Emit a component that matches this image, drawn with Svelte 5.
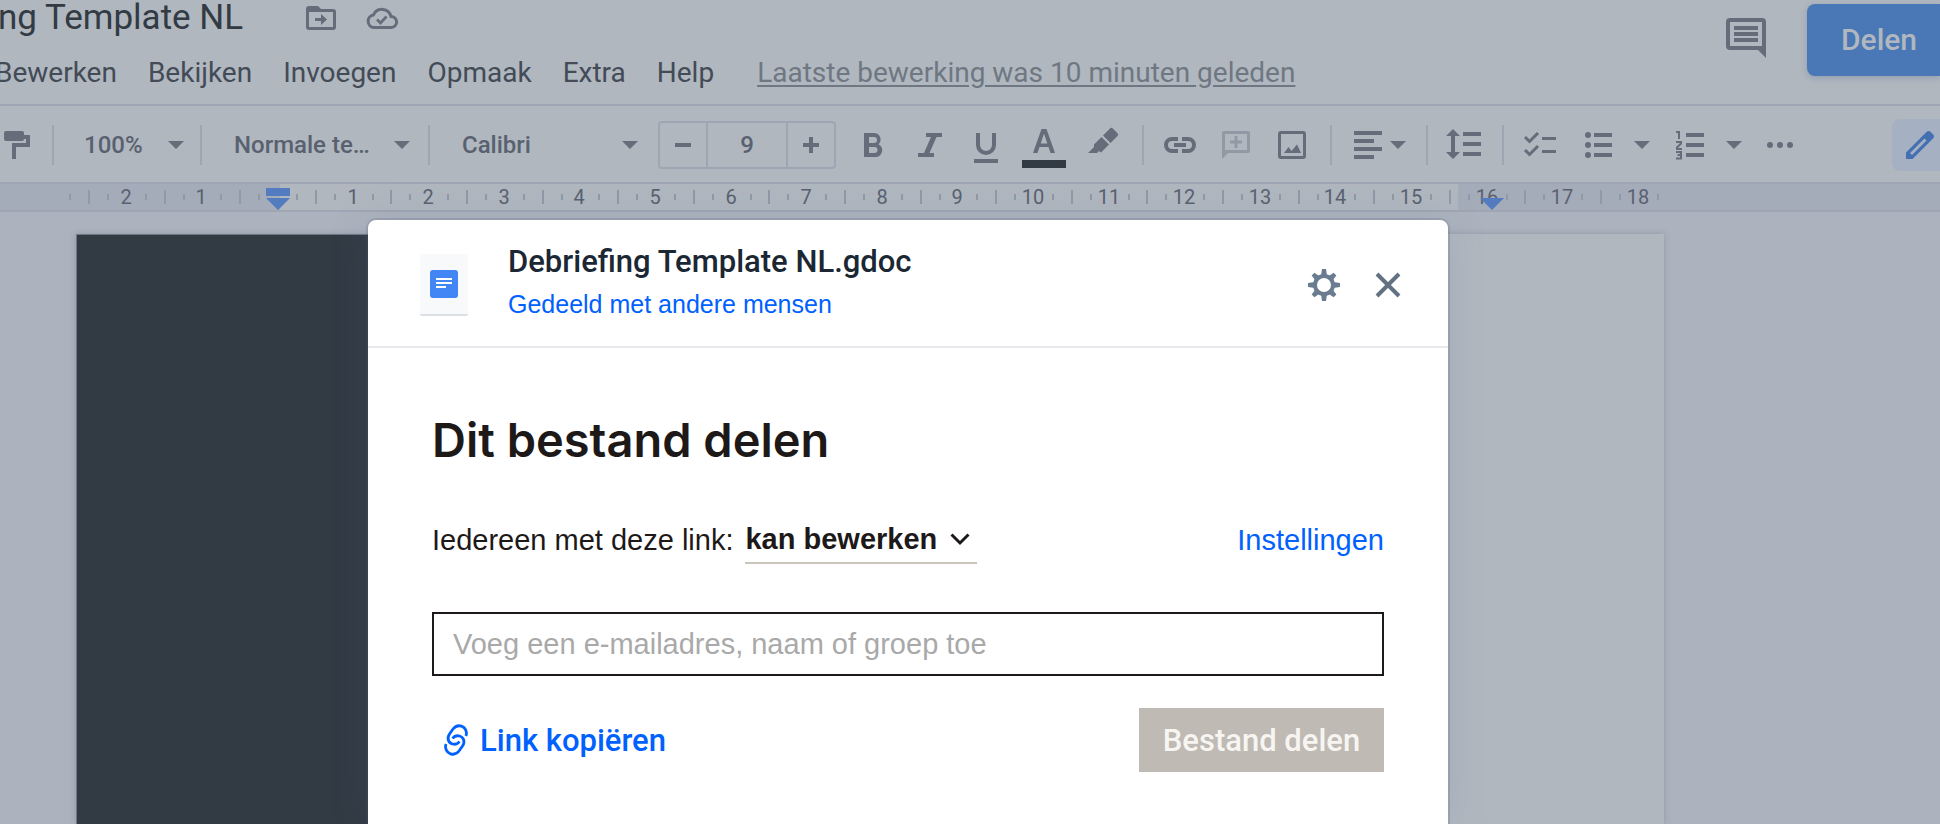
<script>
  let permission = $state('kan bewerken')
  let email = $state('')
  let zoom = $state('100%')
  let textStyle = $state('Normale te…')
  let font = $state('Calibri')

  const menus = ['Bewerken', 'Bekijken', 'Invoegen', 'Opmaak', 'Extra', 'Help']

  // ruler: one centimetre in pixels, and where the left margin sits
  const CM = 75.6
  const ORIGIN = 278

  const ticks = []
  for (let q = -11; q <= 73; q++) {
    if (q % 4 === 0) continue
    ticks.push({ x: Math.round(ORIGIN + (q * CM) / 4), big: q % 2 === 0 })
  }

  const numbers = []
  for (let n = -2; n <= 18; n++) {
    if (n !== 0) numbers.push({ x: Math.round(ORIGIN + n * CM - 1), label: Math.abs(n) })
  }
</script>

{#snippet caret()}
  <svg class="caret" width="16" height="8" viewBox="0 0 16 8"><path d="M0 0h16L8 8z" /></svg>
{/snippet}

<div class="app">
  <header class="header">
    <div class="header-main">
      <div class="title-row">
        <span class="doc-title">ng Template NL</span>
        <button class="plain" aria-label="Verplaatsen">
          <svg width="30" height="24" viewBox="0 0 30 24">
            <path fill-rule="evenodd" d="M3 0h9l3 3h12a3 3 0 0 1 3 3v15a3 3 0 0 1-3 3H3a3 3 0 0 1-3-3V3a3 3 0 0 1 3-3zM3 6v15h24V6z" />
            <path d="M9 12h6V8l6 5.500l-6 5.500v-4H9z" />
          </svg>
        </button>
        <button class="plain" aria-label="Documentstatus">
          <svg width="32" height="24" viewBox="0 0 32 24">
            <path class="line" d="M8 21.500a6.300 6.300 0 0 1-.6-12.500A9.300 9.300 0 0 1 25 10.500a5.500 5.500 0 0 1 .3 11z" stroke-width="3" />
            <path class="line" d="M11 13.500l3.500 3.500l6-6.500" stroke-width="2.600" />
          </svg>
        </button>
      </div>
      <nav class="menu-row" aria-label="Menu">
        {#each menus as menu}
          <button class="menu">{menu}</button>
        {/each}
        <a class="last-edit" href="#geschiedenis">Laatste bewerking was 10 minuten geleden</a>
      </nav>
    </div>
    <div class="header-actions">
      <button class="plain comments" aria-label="Opmerkingen">
        <svg width="40" height="40" viewBox="0 0 40 40">
          <path fill-rule="evenodd" d="M4 0h32a4 4 0 0 1 4 4v36l-8-8H4a4 4 0 0 1-4-4V4a4 4 0 0 1 4-4zM4 4v24h32V4zM8 8h24v4H8zM8 14h24v4H8zM8 20h24v4H8z" />
        </svg>
      </button>
      <button class="share">Delen</button>
    </div>
  </header>

  <div class="toolbar" role="toolbar" aria-label="Opmaak">
    <button class="tool" aria-label="Opmaak kopiëren">
      <svg width="36" height="36" viewBox="0 0 36 36"><path d="M6 4h16a2 2 0 0 1 2 2v2h6v12H16v12h-4V16h14v-4h-2a2 2 0 0 1-2 2H6a2 2 0 0 1-2-2V6a2 2 0 0 1 2-2z" /></svg>
    </button>
    <span class="divider tight"></span>
    <label class="picker zoom">
      <select bind:value={zoom} aria-label="Zoomen"><option>100%</option></select>
      {@render caret()}
    </label>
    <span class="divider tight"></span>
    <label class="picker style">
      <select bind:value={textStyle} aria-label="Stijlen"><option>Normale te…</option></select>
      {@render caret()}
    </label>
    <span class="divider tight"></span>
    <label class="picker font">
      <select bind:value={font} aria-label="Lettertype"><option>Calibri</option></select>
      {@render caret()}
    </label>

    <div class="size">
      <button aria-label="Kleiner"><svg width="16" height="16" viewBox="0 0 16 16"><path d="M0 6h16v4H0z" /></svg></button>
      <input value="9" aria-label="Tekengrootte" />
      <button aria-label="Groter"><svg width="16" height="16" viewBox="0 0 16 16"><path d="M6 0h4v6h6v4h-6v6H6v-6H0V6h6z" /></svg></button>
    </div>

    <div class="group">
      <button class="tool" aria-label="Vet">
        <svg width="36" height="36" viewBox="0 0 36 36">
          <path fill-rule="evenodd" d="M8 6h10.500a6.500 6.500 0 0 1 4 11.200a6.800 6.800 0 0 1-3.500 12.800H8zM13 10v6h5a3 3 0 0 0 0-6zM13 20v6h5.500a3 3 0 0 0 0-6z" />
        </svg>
      </button>
      <button class="tool" aria-label="Cursief">
        <svg width="36" height="36" viewBox="0 0 36 36"><path d="M14 6h16v4h-5.500l-7 16H22v4H6v-4h6l7-16h-5z" /></svg>
      </button>
      <button class="tool" aria-label="Onderstrepen">
        <svg width="36" height="36" viewBox="0 0 36 36">
          <path class="line" d="M10 6v12a8 8 0 0 0 16 0V6" stroke-width="4" />
          <path d="M6 32h24v4H6z" />
        </svg>
      </button>
      <button class="tool wide" aria-label="Tekstkleur">
        <svg width="44" height="36" viewBox="1 0 44 36">
          <path fill-rule="evenodd" d="M19.500 2h5L33 26h-4.500l-2-6h-9l-2 6H11zM22 6.500L18.700 16.500h6.600z" />
          <path class="ink" d="M0 33h44v8H0z" />
        </svg>
      </button>
      <button class="tool" aria-label="Markeringskleur">
        <svg width="36" height="36" viewBox="0 0 36 36">
          <path d="M24 1.500a2 2 0 0 1 2.800 0l4.700 4.700a2 2 0 0 1 0 2.800l-7 7l-7.500-7.500zM15.500 10l7.500 7.500l-8 8l-2-1.500l-2 2H2l6-6v-2.500z" />
        </svg>
      </button>
    </div>
    <span class="divider"></span>
    <div class="group">
      <button class="tool" aria-label="Link invoegen">
        <svg width="36" height="36" viewBox="0 0 36 36">
          <path class="line" d="M16 12h-6a6 6 0 0 0 0 12h6M20 12h6a6 6 0 0 1 0 12h-6" stroke-width="4" />
          <path d="M12 16h12v4H12z" />
        </svg>
      </button>
      <button class="tool" disabled aria-label="Opmerking toevoegen">
        <svg width="36" height="36" viewBox="0 0 36 36">
          <path fill-rule="evenodd" d="M6 4h24a2 2 0 0 1 2 2v18a2 2 0 0 1-2 2H10l-6 6V6a2 2 0 0 1 2-2zM7 7v16h22V7zM16.500 9h3v4.500H24v3h-4.500V21h-3v-4.500H12v-3h4.500z" />
        </svg>
      </button>
      <button class="tool" aria-label="Afbeelding invoegen">
        <svg width="36" height="36" viewBox="0 0 36 36">
          <path fill-rule="evenodd" d="M7 4h22a3 3 0 0 1 3 3v22a3 3 0 0 1-3 3H7a3 3 0 0 1-3-3V7a3 3 0 0 1 3-3zM7 7v22h22V7zM10 26l4.500-6l3 4l5.500-6.500l4 8.500z" />
        </svg>
      </button>
    </div>
    <span class="divider"></span>
    <button class="tool pair near" aria-label="Uitlijnen">
      <svg width="36" height="36" viewBox="0 0 36 36"><path d="M4 4h28v4H4zM4 12h20v4H4zM4 20h28v4H4zM4 28h20v4H4z" /></svg>
      {@render caret()}
    </button>
    <span class="divider"></span>
    <button class="tool" aria-label="Regelafstand">
      <svg width="36" height="36" viewBox="0 0 36 36"><path d="M7 2l7 7H9v16h5l-7 7l-7-7h5V9H0zM17 5h18v4H17zM17 15h18v4H17zM17 25h18v4H17z" /></svg>
    </button>
    <span class="divider"></span>
    <div class="group lists">
      <button class="tool" aria-label="Checklist">
        <svg width="36" height="36" viewBox="0 0 36 36">
          <path d="M20 10h14v3H20zM20 23h14v3H20z" />
          <path class="line" d="M3 10l4.500 4.500L16 6M3 23l4.500 4.500L16 19" stroke-width="3" />
        </svg>
      </button>
      <button class="tool pair" aria-label="Lijst met opsommingstekens">
        <svg width="36" height="36" viewBox="0 0 36 36">
          <circle cx="8" cy="8" r="3" /><circle cx="8" cy="18" r="3" /><circle cx="8" cy="28" r="3" />
          <path d="M14 6h18v4H14zM14 16h18v4H14zM14 26h18v4H14z" />
        </svg>
        {@render caret()}
      </button>
      <button class="tool pair" aria-label="Genummerde lijst">
        <svg width="36" height="36" viewBox="0 0 36 36">
          <path d="M14 6h18v4H14zM14 16h18v4H14zM14 26h18v4H14z" />
          <path class="line" d="M4 5h3v7M4 15h5v1.500l-4 4V22h5M4 25h5v6.500H4M5.500 28H9" stroke-width="2" />
        </svg>
        {@render caret()}
      </button>
      <button class="tool" aria-label="Meer">
        <svg width="36" height="36" viewBox="0 0 36 36"><circle cx="6" cy="18" r="3" /><circle cx="16" cy="18" r="3" /><circle cx="26" cy="18" r="3" /></svg>
      </button>
    </div>
    <button class="mode" aria-label="Bewerkingsmodus">
      <svg width="28" height="28" viewBox="0 0 28 28">
        <path fill-rule="evenodd" d="M0 21.500L20.500 1a3 3 0 0 1 4.200 0L27 3.300a3 3 0 0 1 0 4.200L6.500 28H0zM4 22l2 2L20.500 9.500l-2-2z" />
      </svg>
    </button>
  </div>

  <div class="ruler">
    <svg width="100%" height="26" aria-hidden="true">
      <rect class="ruler-page" x="280" y="0" width="1178" height="26" />
      {#each ticks as tick}
        <rect class="tick" x={tick.x - 1} y={tick.big ? 6 : 10} width="2" height={tick.big ? 14 : 6} />
      {/each}
      {#each numbers as n}
        <text x={n.x} y="20" text-anchor="middle">{n.label}</text>
      {/each}
      <path class="marker" d="M266 4h24v8h-24zM266 14h24l-12 12z" />
      <path class="marker" d="M1480 14h24l-12 12z" />
    </svg>
  </div>

  <main class="canvas">
    <div class="sheet"><div class="cover"></div></div>
  </main>

  <div class="overlay">
    <div class="modal" role="dialog" aria-labelledby="share-title">
      <div class="modal-head">
        <div class="file-thumb">
          <svg width="28" height="28" viewBox="0 0 28 28">
            <rect width="28" height="28" rx="3" fill="#4285f4" />
            <path d="M6 8h16v2H6zM6 12h16v2H6zM6 16h10v2H6z" fill="#fff" />
          </svg>
        </div>
        <div class="file-info">
          <strong>Debriefing Template NL.gdoc</strong>
          <a href="#gedeeld">Gedeeld met andere mensen</a>
        </div>
        <button class="plain gear" aria-label="Instellingen openen">
          <svg width="32" height="32" viewBox="-16 -16 32 32">
            <circle r="9" fill="none" stroke="currentColor" stroke-width="4" />
            {#each [0, 45, 90, 135, 180, 225, 270, 315] as angle}
              <path d={angle % 90 ? 'M-3 -9L-2 -15.500H2L3 -9z' : 'M-3 -9L-2 -16H2L3 -9z'} transform="rotate({angle})" />
            {/each}
          </svg>
        </button>
        <button class="plain close" aria-label="Sluiten">
          <svg width="26" height="26" viewBox="0 0 26 26"><path class="line" d="M2 2l22 22M24 2L2 24" stroke-width="4" /></svg>
        </button>
      </div>

      <div class="modal-body">
        <h1 id="share-title">Dit bestand delen</h1>
        <div class="access">
          <label for="permission">Iedereen met deze link:</label>
          <div class="permission">
            <select id="permission" bind:value={permission}>
              <option>kan bewerken</option>
              <option>kan weergeven</option>
            </select>
            <svg width="20" height="12" viewBox="0 0 20 12"><path class="line" d="M1.500 1.500L10 10l8.500-8.500" stroke-width="3" /></svg>
          </div>
          <a class="settings" href="#instellingen">Instellingen</a>
        </div>
        <input class="email" type="text" bind:value={email} placeholder="Voeg een e-mailadres, naam of groep toe" aria-label="E-mailadres, naam of groep" />
        <div class="actions">
          <button class="copy">
            <svg width="24" height="32" viewBox="0 0 24 32">
              <path class="line" d="M22 12c1.500-4-.5-8.500-4.500-9.800C14 1 11 2.500 9 5L5.500 10C2.500 14.500 4.500 19 8.500 20c3 .8 5.500-.5 7-2.500M2 20c-1.500 4 .5 8.500 4.500 9.800c3.500 1.200 6.500-.3 8.500-2.800l3.500-5c3-4.500 1-9-3-10c-3-.8-5.500.5-7 2.500" stroke-width="2.800" />
            </svg>
            Link kopiëren
          </button>
          <button class="submit" disabled>Bestand delen</button>
        </div>
      </div>
    </div>
  </div>
</div>

<style>
  :global(body) { margin: 0; overflow: hidden; }

  .app {
    --surface: #b0b7bf;
    --rule: #9fa6b3;
    --icon: #656c7a;
    --blue: #0061fe;
    position: relative;
    display: flex;
    flex-direction: column;
    height: 100vh;
    overflow: hidden;
    background: var(--surface);
    color: #434b57;
    font-family: Roboto, sans-serif;
  }

  .app * { box-sizing: border-box; }

  button, select, input {
    margin: 0;
    padding: 0;
    border: 0;
    background: none;
    font: inherit;
    color: inherit;
  }

  select { appearance: none; }
  button { cursor: pointer; }
  svg { display: block; flex: none; fill: currentColor; overflow: visible; }
  .line { fill: none; stroke: currentColor; }
  .plain { color: var(--icon); }

  .header {
    display: flex;
    justify-content: space-between;
    height: 106px;
    border-bottom: 2px solid var(--rule);
  }

  .title-row { display: flex; align-items: center; height: 36px; }

  .doc-title {
    margin-left: -2px;
    margin-right: 63px;
    font-size: 35px;
    line-height: 36px;
    white-space: nowrap;
    color: #323a44;
  }

  .title-row .plain { margin-right: 30px; }

  .menu-row {
    display: flex;
    align-items: center;
    gap: 31px;
    height: 72px;
    margin-left: -5px;
    font-size: 28px;
    white-space: nowrap;
  }

  .last-edit {
    margin-left: 12px;
    color: #6f7783;
    text-underline-offset: 3px;
  }

  .header-actions { display: flex; align-items: flex-start; padding-top: 4px; }
  .comments { margin: 14px 41px 0 0; }

  .share {
    width: 133px;
    height: 72px;
    padding: 0 0 2px 34px;
    border-radius: 8px 0 0 8px;
    background: #4a77b5;
    box-shadow: 0 2px 6px rgb(74 100 150 / 30%);
    color: #b0b7bf;
    font-size: 30px;
    font-weight: 500;
    text-align: left;
  }

  .toolbar {
    display: flex;
    align-items: center;
    height: 78px;
    padding-top: 2px;
    border-bottom: 2px solid var(--rule);
    color: var(--icon);
  }

  .group { display: flex; gap: 20px; }
  .lists { gap: 22px; }
  .tool { display: flex; justify-content: center; align-items: center; height: 36px; }
  .tool:disabled { color: #9199a5; }
  .wide { width: 42px; }
  .pair { gap: 18px; }
  .near { gap: 4px; }
  .ink { fill: #323a44; }

  .divider { width: 2px; height: 40px; margin: 0 18px 0 20px; background: var(--rule); }
  .tight { margin: 0 16px; }

  .picker { display: grid; align-items: center; }
  .picker > * { grid-area: 1 / 1; }
  .picker select { padding-left: 16px; font-size: 24px; font-weight: 500; color: #596170; }
  .picker .caret { justify-self: end; pointer-events: none; }
  .zoom { width: 114px; }
  .zoom select { padding-left: 14px; }
  .style { width: 192px; margin-right: 2px; }
  .font { width: 192px; }

  .size {
    display: flex;
    width: 178px;
    height: 48px;
    margin: 0 20px;
    border: 2px solid var(--rule);
    border-radius: 4px;
  }

  .size button { display: grid; place-items: center; width: 46px; }

  .size input {
    flex: 1;
    min-width: 0;
    border: solid var(--rule);
    border-width: 0 2px;
    font-size: 24px;
    font-weight: 500;
    text-align: center;
    color: #596170;
  }

  .mode {
    width: 48px;
    height: 52px;
    margin-left: auto;
    padding-left: 14px;
    border-radius: 8px 0 0 8px;
    background: #a5b1c3;
    color: #446fb0;
  }

  .ruler { height: 28px; border-bottom: 2px solid var(--rule); background: #a5acb9; }
  .ruler text { font-size: 20px; fill: #596170; }
  .ruler-page { fill: var(--surface); }
  .tick { fill: #9199a7; }
  .marker { fill: #527bc0; }

  .canvas { flex: 1; padding: 22px 276px 0 76px; background: #acb3be; }
  .sheet { height: 100%; background: var(--surface); box-shadow: 0 0 6px rgb(80 90 110 / 30%); }
  .cover { width: 40%; height: 100%; border: solid #6f7782; border-width: 1px 0 0 1px; background: #323a44; }

  .overlay {
    position: absolute;
    inset: 220px 124px 0 0;
    display: flex;
    justify-content: center;
    color: #1e1919;
    font-family: "Liberation Sans", Arial, sans-serif;
    font-size: 29px;
  }

  .modal {
    width: 1080px;
    border-radius: 8px 8px 0 0;
    background: #fff;
    box-shadow: 0 0 0 2px rgb(80 92 115 / 20%), 0 0 40px rgb(90 105 140 / 15%);
  }

  .modal a { color: var(--blue); text-decoration: none; }

  .modal-head {
    display: flex;
    align-items: center;
    height: 128px;
    padding: 4px 48px 0 52px;
    border-bottom: 2px solid #e6e8eb;
  }

  .file-thumb {
    display: grid;
    place-items: center;
    width: 48px;
    height: 62px;
    margin-right: 40px;
    border-bottom: 2px solid #dcdfe3;
    border-radius: 2px;
    background: #f7f9fa;
  }

  .file-info { display: flex; flex-direction: column; gap: 6px; flex: 1; padding-bottom: 4px; }
  .file-info strong { font-family: Roboto, sans-serif; font-size: 31px; font-weight: 500; line-height: 36px; color: #1b2733; }
  .file-info a { font-size: 25px; line-height: 36px; }
  .gear { color: #6b7c90; margin-right: 35px; }
  .close { color: #637282; margin-right: -1px; }

  .modal-body { padding: 64px 64px 0; }

  h1 { margin: 0; font-family: Inter, sans-serif; font-size: 47px; font-weight: 600; line-height: 56px; }

  .access { display: flex; align-items: center; height: 48px; margin: 48px 0; }

  .permission {
    display: grid;
    align-items: center;
    width: 232px;
    height: 48px;
    margin-left: 12px;
    border-bottom: 2px solid #c9c5bc;
    font-weight: 700;
  }

  .permission > * { grid-area: 1 / 1; }
  .permission svg { justify-self: end; margin-right: 7px; pointer-events: none; }
  .settings { margin-left: auto; }

  .email {
    display: block;
    width: 100%;
    height: 64px;
    padding: 0 19px;
    border: 2px solid #1e1919;
  }

  .email::placeholder { color: #a9a9a9; opacity: 1; }

  .actions {
    display: flex;
    justify-content: space-between;
    margin-top: 32px;
    font-family: Roboto, sans-serif;
    font-size: 31px;
    font-weight: 500;
  }

  .copy {
    display: flex;
    align-items: center;
    gap: 12px;
    padding-left: 12px;
    color: var(--blue);
  }

  .submit { width: 245px; height: 64px; background: #c0bab4; color: #f7f5f2; }
</style>
